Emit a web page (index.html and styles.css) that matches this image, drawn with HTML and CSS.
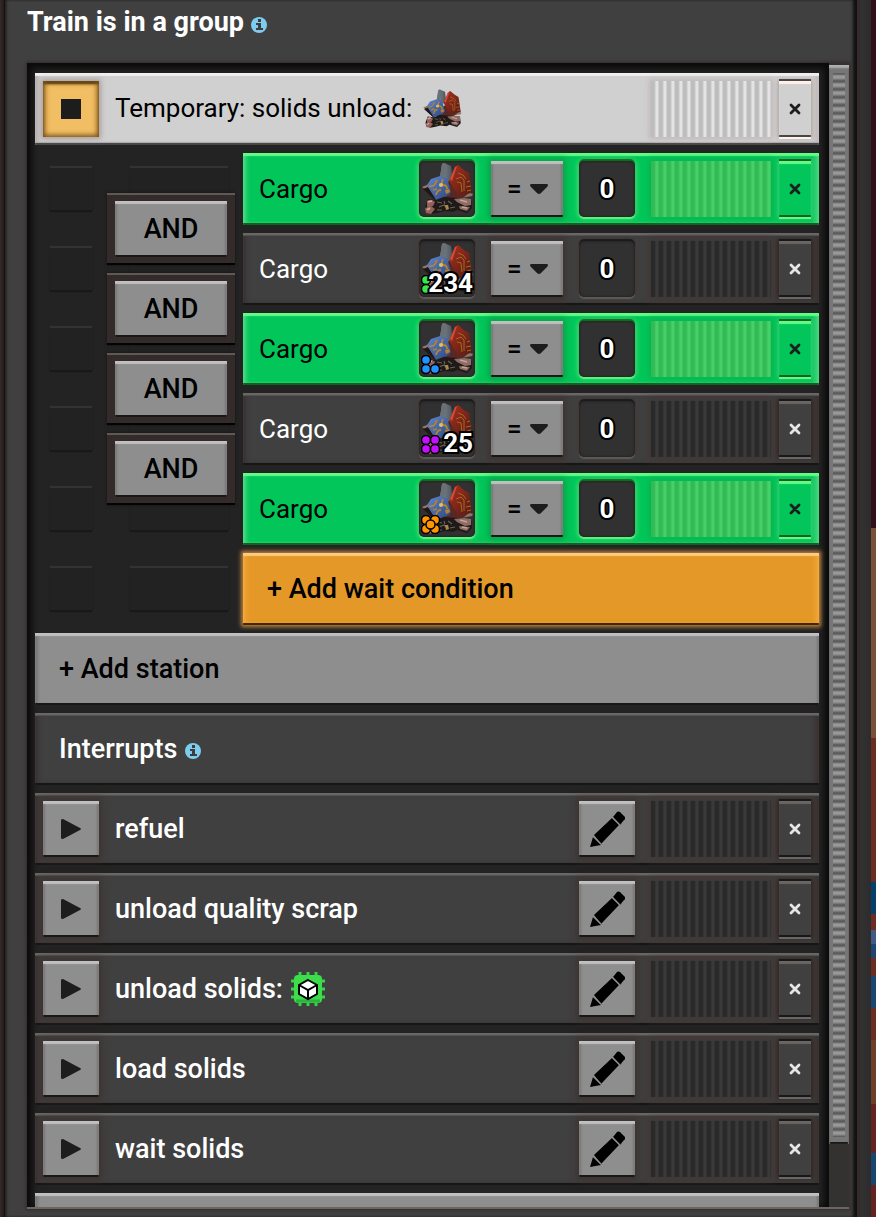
FILE: index.html
```html
<!DOCTYPE html>
<html lang="en">
<head>
<meta charset="utf-8">
<title>Train schedule</title>
<link rel="stylesheet" href="styles.css">
</head>
<body>
<svg class="defs" aria-hidden="true">
  <defs>
    <linearGradient id="steel" x1="0" x2="1"><stop offset="0" stop-color="#848c93"/><stop offset="1" stop-color="#4b5157"/></linearGradient>
    <linearGradient id="red" x1="0" x2="1" y2="1"><stop offset="0" stop-color="#a8321f"/><stop offset="1" stop-color="#561a13"/></linearGradient>
    <linearGradient id="blue" x1="0" x2="1" y2="1"><stop offset="0" stop-color="#5f87cf"/><stop offset="1" stop-color="#2a4580"/></linearGradient>
    <symbol id="scrap" viewBox="0 0 56 56">
      <path d="M23 3l2-1 7 3 2 15-11 1-2-5z" fill="url(#steel)"/>
      <path d="M23 3l2-1 2 1-2 15-4-2z" fill="#687078"/>
      <path d="M3 26l7-3 9 13-2 1zM46 30l8 3-1 2-16 3 2-6z" fill="#8f7768"/>
      <path d="M18 34l14-11 18 9-6 5-13 3-12-3z" fill="#5a2723"/>
      <path d="M4 28l12 11 2-1-9-12z" fill="#211614"/>
      <path d="M31 18l5-12 3-2 6 5 5 3 3 20-14 2-9-14z" fill="url(#red)"/>
      <path d="M31 18l5-12 2-1-5 15z" fill="#d8493a"/>
      <path d="M37 18l5-2 3 3v11M39 12l5 2 3 4M38 21l4 1 1 9M47 26l5-1M48 30l4-1M48 21l3-1" fill="none" stroke="#a56a1f" stroke-width="1"/>
      <path d="M8 24l4-6 9-3 7 2 4 14-2 3-13 5z" fill="url(#blue)"/>
      <path d="M10 25q4 1 6-2l2-4M17 34q1-5 5-5M14 29l4-1M24 18q-2 4 0 6 4 0 4 4" fill="none" stroke="#b78329" stroke-width="1.8"/>
      <path d="M26 29l4-1 1 3-4 2z" fill="#b78329"/>
      <circle cx="22" cy="24" r="2" fill="#e2c060"/>
      <path d="M6 46l3-8 8 1 8-3 14 1 13 1 1 9-5 5-10-3-4 2-8-1-8 2-6 1-5-3z" fill="#1f1917"/>
      <path d="M8 40q4-3 8 1l-2 4-6 1zM6 47l6-2 4 3-4 5-5-1z" fill="#93605a"/>
      <path d="M9 41l4-1M8 49l3-2" stroke="#d3a598" stroke-width="1.8"/>
      <path d="M35 38l10-1 7 1v6l-6 1-8-4zM40 45l11 1-3 4-7-2z" fill="#8d6d64"/>
      <path d="M41 39l7 2M43 46l5 1" stroke="#c5a498" stroke-width="1.6"/>
      <path d="M18 41l5 1M20 46l5-2 3 3M29 40l4 3M18 49h5M31 47l5-1M25 40l1 3" fill="none" stroke="#68625c" stroke-width="1.1"/>
      <path d="M26 44h3l1 4-3 1z" fill="#a98b4c"/>
    </symbol>
    <symbol id="info" viewBox="0 0 16 16">
      <circle cx="8" cy="8" r="8" fill="#7dccef"/>
      <path d="M7 2h3v3H7zM5 6h5v5h2v2H5v-2h2V8H5z" fill="#403b3b"/>
    </symbol>
    <symbol id="cross" viewBox="0 0 12 12"><path d="M2 2l8 8M10 2l-8 8" stroke="currentColor" stroke-width="2.8" stroke-linecap="round"/></symbol>
    <symbol id="play" viewBox="0 0 20 20"><path d="M0 1q0-1 2-1l17 9q2 1 0 2L2 20q-2 0-2-1z" fill="#1d1d1d"/></symbol>
    <symbol id="pencil" viewBox="0 0 36 36"><path d="M4 26l8 8-11 2zM5 24L23 7l7 7-18 19zM24 6l4-5q1-1 3 0l5 5q1 2-1 3l-4 5z" fill="#000"/><path d="M23 6l8 8M4 25l8 8" stroke="#8e8e8e" stroke-width="1.3"/></symbol>
    <symbol id="down" viewBox="0 0 18 10"><path d="M1 0h16q2 1 0 3l-6 6q-2 2-4 0L1 3q-2-2 0-3z" fill="#1d1d1d"/></symbol>
  </defs>
</svg>
<div class="screen">
  <div class="edge-left"></div>
  <main class="panel">
    <h1 class="title">Train is in a group <svg class="info"><use href="#info"/></svg></h1>
    <div class="frame">
      <div class="list">
        <section class="row row-light">
          <button class="square stop" aria-label="Stop"><span class="stop-mark"></span></button>
          <span class="label thin">Temporary: solids unload: <svg class="scrap-inline"><use href="#scrap"/></svg></span>
          <span class="handle"></span>
          <button class="close" aria-label="Remove station"><svg><use href="#cross"/></svg></button>
        </section>

        <section class="conditions">
          <div class="slots">
            <i></i><i></i><i></i><i></i><i></i><i></i><i></i><i></i><i></i><i></i><i></i><i></i>
          </div>
          <div class="joins">
            <div class="join"><button class="and">AND</button></div>
            <div class="join"><button class="and">AND</button></div>
            <div class="join"><button class="and">AND</button></div>
            <div class="join"><button class="and">AND</button></div>
          </div>
          <div class="cond-list">
            <div class="row row-green">
              <span class="label thin">Cargo</span>
              <button class="item" aria-label="Scrap"><svg class="scrap"><use href="#scrap"/></svg></button>
              <div class="compare"><select aria-label="Comparison 1"><option>=</option></select><svg><use href="#down"/></svg></div>
              <input class="count" aria-label="Amount 1" value="0">
              <span class="handle"></span>
              <button class="close" aria-label="Remove condition 1"><svg><use href="#cross"/></svg></button>
            </div>
            <div class="row">
              <span class="label thin">Cargo</span>
              <button class="item" aria-label="Uncommon scrap"><svg class="scrap"><use href="#scrap"/></svg>
                <svg class="quality" viewBox="0 0 20 20"><g fill="#35e84b" stroke="#000" stroke-width="1.5"><circle cx="5" cy="5" r="4.5"/><circle cx="5" cy="14" r="4.5"/></g></svg>
                <span class="amount">234</span></button>
              <div class="compare"><select aria-label="Comparison 2"><option>=</option></select><svg><use href="#down"/></svg></div>
              <input class="count" aria-label="Amount 2" value="0">
              <span class="handle"></span>
              <button class="close" aria-label="Remove condition 2"><svg><use href="#cross"/></svg></button>
            </div>
            <div class="row row-green">
              <span class="label thin">Cargo</span>
              <button class="item" aria-label="Rare scrap"><svg class="scrap"><use href="#scrap"/></svg>
                <svg class="quality" viewBox="0 0 20 20"><g fill="#2293ff" stroke="#000" stroke-width="1.5"><circle cx="5" cy="5" r="4.5"/><circle cx="5" cy="14" r="4.5"/><circle cx="14" cy="14" r="4.5"/></g></svg></button>
              <div class="compare"><select aria-label="Comparison 3"><option>=</option></select><svg><use href="#down"/></svg></div>
              <input class="count" aria-label="Amount 3" value="0">
              <span class="handle"></span>
              <button class="close" aria-label="Remove condition 3"><svg><use href="#cross"/></svg></button>
            </div>
            <div class="row">
              <span class="label thin">Cargo</span>
              <button class="item" aria-label="Epic scrap"><svg class="scrap"><use href="#scrap"/></svg>
                <svg class="quality" viewBox="0 0 20 20"><g fill="#c410ff" stroke="#000" stroke-width="1.5"><circle cx="5" cy="5" r="4.5"/><circle cx="14" cy="5" r="4.5"/><circle cx="5" cy="14" r="4.5"/><circle cx="14" cy="14" r="4.5"/></g></svg>
                <span class="amount">25</span></button>
              <div class="compare"><select aria-label="Comparison 4"><option>=</option></select><svg><use href="#down"/></svg></div>
              <input class="count" aria-label="Amount 4" value="0">
              <span class="handle"></span>
              <button class="close" aria-label="Remove condition 4"><svg><use href="#cross"/></svg></button>
            </div>
            <div class="row row-green">
              <span class="label thin">Cargo</span>
              <button class="item" aria-label="Legendary scrap"><svg class="scrap"><use href="#scrap"/></svg>
                <svg class="quality" viewBox="0 0 20 20"><g fill="#ff9500" stroke="#000" stroke-width="1.5"><circle cx="5" cy="5" r="4.5"/><circle cx="14" cy="5" r="4.5"/><circle cx="5" cy="14" r="4.5"/><circle cx="14" cy="14" r="4.5"/><circle cx="9.5" cy="9.5" r="4.5"/></g></svg></button>
              <div class="compare"><select aria-label="Comparison 5"><option>=</option></select><svg><use href="#down"/></svg></div>
              <input class="count" aria-label="Amount 5" value="0">
              <span class="handle"></span>
              <button class="close" aria-label="Remove condition 5"><svg><use href="#cross"/></svg></button>
            </div>
            <button class="wide add-condition">+ Add wait condition</button>
          </div>
        </section>

        <button class="wide">+ Add station</button>
        <h2 class="row heading">Interrupts <svg class="info"><use href="#info"/></svg></h2>

        <div class="row">
          <button class="square" aria-label="Run refuel"><svg class="play"><use href="#play"/></svg></button>
          <span class="label">refuel</span>
          <button class="square" aria-label="Edit refuel"><svg class="pencil"><use href="#pencil"/></svg></button>
          <span class="handle"></span>
          <button class="close" aria-label="Remove refuel"><svg><use href="#cross"/></svg></button>
        </div>
        <div class="row">
          <button class="square" aria-label="Run unload quality scrap"><svg class="play"><use href="#play"/></svg></button>
          <span class="label">unload quality scrap</span>
          <button class="square" aria-label="Edit unload quality scrap"><svg class="pencil"><use href="#pencil"/></svg></button>
          <span class="handle"></span>
          <button class="close" aria-label="Remove unload quality scrap"><svg><use href="#cross"/></svg></button>
        </div>
        <div class="row">
          <button class="square" aria-label="Run unload solids"><svg class="play"><use href="#play"/></svg></button>
          <span class="label">unload solids:
            <svg class="chip" viewBox="0 0 36 36">
              <path d="M10 1v34M18 1v34M26 1v34M1 10h34M1 18h34M1 26h34" stroke="#35d34a" stroke-width="3"/>
              <rect x="4" y="4" width="28" height="28" rx="4" fill="#3cdc4a"/>
              <path d="M6 30h24" stroke="#2fb23f" stroke-width="3"/>
              <path d="M18 9l9 5v9l-9 5-9-5v-9z" fill="#fff" stroke="#000" stroke-width="2"/>
              <path d="M9 14l9 5 9-5M18 19v9" fill="none" stroke="#000" stroke-width="2"/>
            </svg></span>
          <button class="square" aria-label="Edit unload solids"><svg class="pencil"><use href="#pencil"/></svg></button>
          <span class="handle"></span>
          <button class="close" aria-label="Remove unload solids"><svg><use href="#cross"/></svg></button>
        </div>
        <div class="row">
          <button class="square" aria-label="Run load solids"><svg class="play"><use href="#play"/></svg></button>
          <span class="label">load solids</span>
          <button class="square" aria-label="Edit load solids"><svg class="pencil"><use href="#pencil"/></svg></button>
          <span class="handle"></span>
          <button class="close" aria-label="Remove load solids"><svg><use href="#cross"/></svg></button>
        </div>
        <div class="row">
          <button class="square" aria-label="Run wait solids"><svg class="play"><use href="#play"/></svg></button>
          <span class="label">wait solids</span>
          <button class="square" aria-label="Edit wait solids"><svg class="pencil"><use href="#pencil"/></svg></button>
          <span class="handle"></span>
          <button class="close" aria-label="Remove wait solids"><svg><use href="#cross"/></svg></button>
        </div>
        <button class="wide" aria-label="Add interrupt"></button>
      </div>
      <div class="scrollbar"><div class="thumb"></div></div>
    </div>
  </main>
  <div class="edge-right"></div>
  <div class="map"></div>
</div>
</body>
</html>
```
FILE: styles.css
```css
* { box-sizing: border-box; }
body {
  margin: 0;
  background: #313030;
  color: #fff;
  font: 500 26px/32px Roboto, "Open Sans", sans-serif;
}
button, select, input { font: inherit; color: #000; border: 0; border-radius: 0; margin: 0; padding: 0; }
svg { display: inline-block; flex: none; }
.defs { position: absolute; width: 0; height: 0; }

.screen { display: flex; height: 100vh; overflow: hidden; }
.edge-left { width: 5px; background: linear-gradient(90deg, #302b2b, #2c2020 60%, #100c0c); }
.edge-right { width: 14px; background: linear-gradient(90deg, #352829, #323131 5px, #2d2b2b); }
.map {
  width: 5px;
  background: linear-gradient(#32101a 528px, #7a5038 528px 738px, #6b2d22 738px 882px, #04406a 882px 914px,
    #6b2d22 914px 930px, #3f5a85 930px 944px, #1f4671 944px 958px, #6b2d22 958px 976px, #1b4672 976px 1008px,
    #6b2d22 1008px 1040px, #6c3f27 1040px 1104px, #64231f 1104px 1153px, #174671 1153px 1185px, #64231f 1185px);
}
.panel {
  flex: 1;
  min-width: 0;
  display: flex;
  flex-direction: column;
  padding: 0 8px 8px 22px;
  background: #404040;
  box-shadow: inset -5px 0 3px -1px #111, inset 2px 0 2px #282626;
}
.title { margin: 0; padding: 6px 0 24px; height: 63px; font-size: 27px; line-height: 32px; font-weight: 700; }
.info { width: 16px; height: 16px; vertical-align: -2px; }

.frame {
  flex: 1;
  min-height: 0;
  display: flex;
  background: #242324;
  border-bottom: 2px solid #6a6664;
  box-shadow: 0 0 3px 1px #342b29;
}
.list {
  flex: 1;
  min-width: 0;
  display: flex;
  flex-direction: column;
  gap: 8px;
  padding: 10px 10px 0 8px;
  overflow: hidden;
  box-shadow: inset 5px 5px 6px #0b0b0b, inset -5px 0 6px #0b0b0b;
}
.scrollbar { width: 20px; padding-top: 2px; background: #333230; }
.thumb {
  height: calc(100% - 63px);
  padding: 8px 4px 7px;
  background:
    repeating-linear-gradient(#5d5d5d 0 1px, #989898 3px 5px, #6c6c6c 7px, #565656 8px) content-box,
    #777;
  box-shadow: inset 0 3px 2px #b0b0b0, inset -1px 0 1px #555, inset 1px 0 1px #555, inset 0 -2px 0 #171717;
}

.row {
  flex: none;
  display: flex;
  align-items: center;
  gap: 16px;
  height: 72px;
  margin: 0;
  padding: 8px;
  background: #404040;
  box-shadow: inset 0 2px 0 #6a6664, inset 0 3px 1px #555, inset 0 -2px 0 #171616, inset 3px 0 4px #3b3130, inset -4px 0 5px #3b3130;
}
.label { flex: 1; min-width: 0; white-space: nowrap; font-size: 27px; }
.thin { font-size: 26px; font-weight: 400; }
.cond-list .label { padding-left: 8px; }
.row-light {
  background: #d0d0d0;
  color: #000;
  box-shadow: inset 0 3px 1px #f2eeee, inset 0 -2px 0 #484646, inset 0 -3px 1px #aaa, inset 3px 0 4px #b4aaaa, inset -4px 0 5px #c3b8b7;
}
.row-green {
  background: #02c65a;
  color: #000;
  box-shadow: inset 0 3px 1px #62fb83, inset 0 -2px 0 #14601f, inset 3px 0 4px #54dc88, inset -4px 0 5px #4ad680;
}
.heading { padding-left: 24px; gap: 8px; font-size: 27px; font-weight: 500; }
.heading .info { margin-top: 4px; }

.square, .item, .count { flex: none; width: 56px; height: 56px; }
.square, .compare, .and {
  display: grid;
  place-items: center;
  background: #8e8e8e;
  box-shadow: inset 0 3px 1px #c0c0c0, inset 0 -2px 0 #181818, inset 2px 0 2px #777, inset -2px 0 2px #777, 0 0 6px 3px #3d3231;
}
.stop { background: #f1be64; box-shadow: inset 0 0 5px 2px #7b5216, inset 0 3px 2px #49300a, 0 0 5px 2px #aaa0a0; }
.stop-mark { width: 20px; height: 20px; background: #1d1d1d; }
.play { width: 20px; height: 20px; }
.pencil { width: 36px; height: 36px; }
.chip { width: 36px; height: 36px; vertical-align: -9px; }

.handle {
  flex: none;
  width: 120px;
  height: 56px;
  margin-right: -8px;
  background: repeating-linear-gradient(90deg, #292929 0 3px, #2e2e2e 4px, #3a3a3a 5px 7px, #292929 8px);
  box-shadow: 0 0 6px 3px #413735;
}
.row-light .handle { background: repeating-linear-gradient(90deg, #bdbdbd 0 3px, #c8c8c8 4px, #e4e4e4 5px 7px, #bdbdbd 8px); box-shadow: 0 0 5px 2px #c2b9b8; }
.row-green .handle { background: repeating-linear-gradient(90deg, #32ba55 0 3px, #3cc15d 4px, #46d168 5px 7px, #32ba55 8px); box-shadow: 0 0 6px 2px #08b34f; }
.close {
  flex: none;
  display: grid;
  place-items: center;
  width: 32px;
  height: 56px;
  background: #404040;
  color: #e6e6e6;
  box-shadow: inset 0 3px 1px #6a6664, inset 0 -2px 0 #191818, 0 -2px 0 #191818, 0 2px 0 #6a6664, 0 0 4px 2px #322420;
}
.close svg { width: 12px; height: 12px; }
.row-light .close { background: #d0d0d0; color: #1d1d1d; box-shadow: inset 0 3px 1px #fff1ea, inset 0 -2px 0 #484646, 0 -2px 0 #484646, 0 2px 0 #fff1ea, 0 0 4px 1px #a99f99; }
.row-green .close { background: #02c65a; color: #1d1d1d; box-shadow: inset 0 3px 1px #62fb83, inset 0 -2px 0 #14601f, 0 -2px 0 #14601f, 0 2px 0 #62fb83, 0 0 4px 1px #45c979; }

.item, .count { border-radius: 5px; background: #313131; box-shadow: inset 0 0 3px #1a1a1a, 0 -2px 1px #1c1a1a, 0 2px 1px #5d5a58, 0 0 4px 2px #453a38; }
.row-green .item, .row-green .count { box-shadow: inset 0 0 3px #1a1a1a, 0 -2px 1px #13691f, 0 2px 1px #5bf57d, 0 0 4px 2px #38dc6e; }
.item { display: grid; overflow: hidden; }
.item > * { grid-area: 1 / 1; }
.scrap { width: 56px; height: 56px; }
.scrap-inline { width: 42px; height: 42px; margin-left: 2px; vertical-align: -13px; }
.quality { width: 20px; height: 20px; margin-left: 2px; align-self: end; margin-bottom: 2px; }
.amount, .count { color: #fff; font-weight: 700; -webkit-text-stroke: 4px #000; paint-order: stroke fill; }
.amount { place-self: end; font-size: 26px; line-height: 28px; padding-right: 2px; }
.count { text-align: center; font-size: 26px; }

.compare { flex: none; grid-template-columns: 1fr; width: 72px; height: 56px; }
.row-green .compare { box-shadow: inset 0 3px 1px #c0c0c0, inset 0 -2px 0 #181818, inset 2px 0 2px #777, inset -2px 0 2px #777, 0 0 6px 3px #08a448; }
.compare > * { grid-area: 1 / 1; }
.compare select { width: 100%; height: 100%; padding-left: 16px; appearance: none; background: none; }
.compare svg { width: 18px; height: 10px; justify-self: end; margin-right: 15px; pointer-events: none; }

.conditions { flex: none; display: grid; grid-template-columns: 208px minmax(0, 1fr); }
.slots {
  grid-area: 1 / 1;
  display: grid;
  grid-template-columns: 42px 98px;
  grid-auto-rows: 42px;
  gap: 38px;
  padding: 15px 0 0 15px;
}
.slots i { background: #232223; box-shadow: 0 -2px 1px #343232, 0 2px 1px #191819, 0 0 2px #1b1a1b; }
.joins { grid-area: 1 / 1; display: flex; flex-direction: column; gap: 8px; padding: 40px 8px 0 72px; }
.join { height: 72px; padding: 8px; background: #332b2a; box-shadow: inset 0 2px 0 #5e5957, inset 0 -2px 0 #030303, 0 0 3px #151212; }
.and { width: 100%; height: 56px; font-size: 27px; box-shadow: inset 0 3px 1px #c0c0c0, inset 0 -2px 0 #181818, inset 2px 0 2px #777, inset -2px 0 2px #777; }
.cond-list { display: flex; flex-direction: column; gap: 8px; min-width: 0; }

.wide {
  flex: none;
  height: 72px;
  padding: 0 24px;
  font-size: 27px;
  text-align: left;
  background: #8e8e8e;
  box-shadow: inset 0 3px 1px #c0c0c0, inset 0 -2px 0 #181818, inset 3px 0 3px #777, inset -2px 0 2px #777;
}
.add-condition {
  background: #e39827;
  box-shadow: inset 0 3px 1px #ffca7c, inset 0 -2px 0 #472700, inset 3px 0 4px #f3a737, inset -3px 0 4px #f3a737, 0 0 4px 2px #b98442;
}
```
